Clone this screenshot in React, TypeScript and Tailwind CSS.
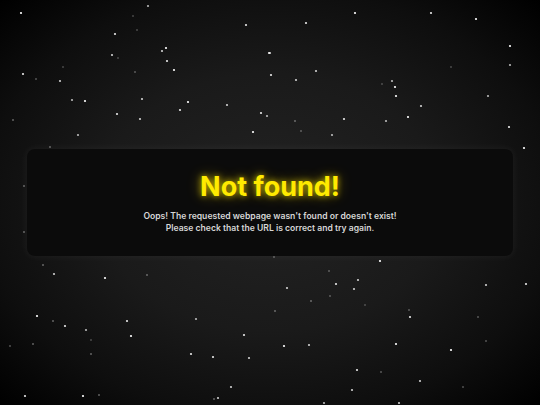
const STARS: [number, number, number][] = [
  [21, 13, 1], [148, 6, 0.7], [133, 16, 0.4], [246, 25, 0.9], [115, 34, 0.9], [137, 30, 0.4],
  [162, 51, 0.8], [166, 48, 1], [112, 55, 0.8], [118, 58, 0.4], [167, 61, 0.9], [63, 67, 0.4],
  [23, 74, 0.9], [174, 70, 1], [135, 72, 0.5], [36, 79, 0.5], [60, 81, 0.8], [72, 100, 0.7],
  [85, 101, 1], [142, 99, 0.8], [188, 102, 1], [180, 110, 0.9], [227, 105, 0.8], [117, 114, 0.9],
  [140, 119, 0.8], [261, 113, 0.9], [267, 116, 0.7], [13, 120, 0.6], [253, 132, 1], [78, 135, 0.7],
  [50, 147, 0.6], [269, 53, 0.9], [355, 13, 1], [431, 13, 0.9], [306, 23, 0.9], [476, 19, 1],
  [270, 53, 0.8], [510, 46, 1], [510, 65, 0.7], [451, 67, 0.4], [271, 75, 0.9], [316, 71, 0.8],
  [296, 80, 0.8], [392, 81, 0.7], [382, 84, 0.4], [395, 87, 1], [396, 96, 1], [488, 96, 0.7],
  [421, 106, 0.8], [408, 117, 1], [295, 121, 0.6], [344, 119, 0.9], [301, 131, 0.5], [386, 121, 0.7],
  [332, 135, 0.7], [509, 127, 0.9], [524, 148, 1], [24, 186, 0.6], [24, 232, 0.6],
  [43, 265, 0.6], [54, 274, 0.8], [105, 278, 1], [147, 275, 0.6], [37, 316, 1], [53, 321, 0.6],
  [65, 326, 0.9], [86, 330, 0.7], [127, 321, 0.9], [131, 336, 1], [91, 340, 0.4], [10, 346, 0.5],
  [33, 344, 0.6], [91, 354, 0.6], [196, 319, 0.7], [244, 335, 0.9], [191, 354, 0.9], [213, 357, 0.9],
  [249, 358, 0.8], [231, 387, 0.8], [25, 396, 0.9], [83, 396, 1], [99, 395, 0.6], [214, 399, 0.6],
  [218, 398, 0.8], [274, 257, 0.5], [380, 261, 1], [329, 271, 0.5], [336, 284, 0.9], [358, 280, 0.8],
  [354, 289, 0.8], [287, 288, 0.8], [311, 301, 0.6], [330, 296, 0.5], [365, 305, 0.4], [275, 311, 0.6],
  [409, 310, 0.5], [410, 317, 0.9], [478, 317, 0.5], [486, 285, 0.8], [526, 284, 0.9], [486, 341, 0.5],
  [284, 346, 1], [309, 345, 0.8], [396, 344, 1], [451, 350, 1], [357, 370, 0.9], [381, 372, 0.5],
  [420, 381, 0.8], [463, 387, 0.5], [352, 390, 0.8], [324, 403, 0.7], [399, 403, 0.8],
];

function StarField() {
  return (
    <svg className="absolute inset-0 h-full w-full" viewBox="0 0 540 405" aria-hidden>
      {STARS.map(([x, y, o], i) => (
        <circle key={i} cx={x} cy={y} r={o > 0.6 ? 1.1 : 0.8} fill="#fff" opacity={o} />
      ))}
    </svg>
  );
}

export default function App() {
  return (
    <div
      className="relative flex h-[405px] w-full items-center justify-center overflow-hidden bg-[radial-gradient(ellipse_at_center,#232323_0%,#1a1a1a_45%,#0e0e0e_75%,#000_100%)] px-[27px]"
      style={{ fontFamily: 'Inter, "Noto Sans", sans-serif' }}
    >
      <StarField />
      {/* message card */}
      <div className="relative flex h-[107px] w-full flex-col items-center justify-center rounded-lg bg-[#0b0b0b] shadow-[0_0_6px_2px_rgba(255,255,255,0.04)]">
        <h1 className="text-[27px] leading-[32px] font-bold text-[#ffea00] [text-shadow:0_0_6px_rgba(255,234,0,0.7),0_0_14px_rgba(255,220,0,0.45)]">
          Not found!
        </h1>
        <p className="mt-[7px] text-center text-[8.6px] leading-[12px] font-semibold text-[#d6d6d6]">
          Oops! The requested webpage wasn't found or doesn't exist!
          <br />
          Please check that the URL is correct and try again.
        </p>
      </div>
    </div>
  );
}
